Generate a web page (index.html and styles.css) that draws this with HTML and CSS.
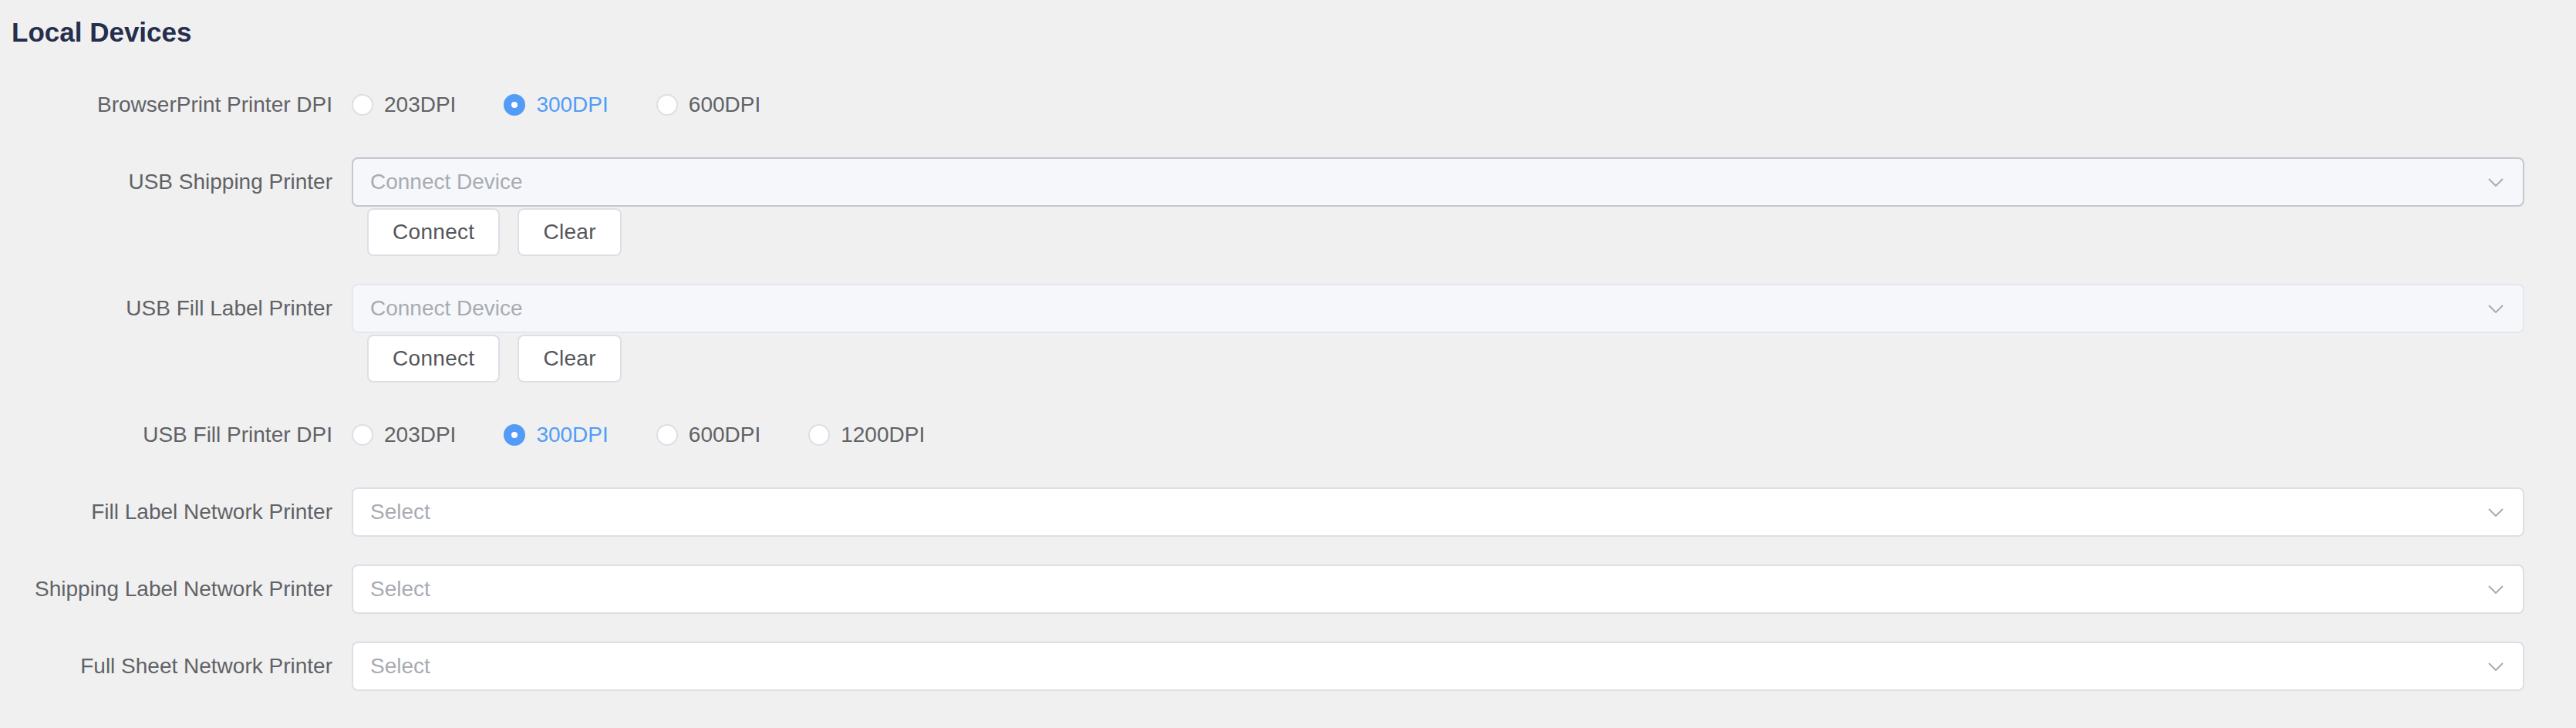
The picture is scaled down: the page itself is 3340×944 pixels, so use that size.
FILE: index.html
```html
<!DOCTYPE html>
<html lang="en">
<head>
<meta charset="utf-8">
<title>Local Devices</title>
<link rel="stylesheet" href="styles.css">
</head>
<body>
<div class="page">
  <h2 class="title">Local Devices</h2>
  <form class="form">
    <div class="form-item">
      <label class="form-label">BrowserPrint Printer DPI</label>
      <div class="form-content">
        <div class="radio-group">
          <label class="radio"><span class="radio-input"></span><span class="radio-label">203DPI</span></label>
          <label class="radio is-checked"><span class="radio-input"></span><span class="radio-label">300DPI</span></label>
          <label class="radio"><span class="radio-input"></span><span class="radio-label">600DPI</span></label>
        </div>
      </div>
    </div>

    <div class="form-item">
      <label class="form-label">USB Shipping Printer</label>
      <div class="form-content">
        <div class="select is-disabled is-hover">
          <span class="placeholder">Connect Device</span>
          <svg class="chevron" width="20" height="11" viewBox="0 0 20 11"><polyline points="1,1 10,10 19,1" fill="none" stroke="#a8abb2" stroke-width="2"/></svg>
        </div>
        <div class="btn-row">
          <button type="button" class="btn">Connect</button>
          <button type="button" class="btn">Clear</button>
        </div>
      </div>
    </div>

    <div class="form-item">
      <label class="form-label">USB Fill Label Printer</label>
      <div class="form-content">
        <div class="select is-disabled">
          <span class="placeholder">Connect Device</span>
          <svg class="chevron" width="20" height="11" viewBox="0 0 20 11"><polyline points="1,1 10,10 19,1" fill="none" stroke="#a8abb2" stroke-width="2"/></svg>
        </div>
        <div class="btn-row">
          <button type="button" class="btn">Connect</button>
          <button type="button" class="btn">Clear</button>
        </div>
      </div>
    </div>

    <div class="form-item">
      <label class="form-label">USB Fill Printer DPI</label>
      <div class="form-content">
        <div class="radio-group">
          <label class="radio"><span class="radio-input"></span><span class="radio-label">203DPI</span></label>
          <label class="radio is-checked"><span class="radio-input"></span><span class="radio-label">300DPI</span></label>
          <label class="radio"><span class="radio-input"></span><span class="radio-label">600DPI</span></label>
          <label class="radio"><span class="radio-input"></span><span class="radio-label">1200DPI</span></label>
        </div>
      </div>
    </div>

    <div class="form-item">
      <label class="form-label">Fill Label Network Printer</label>
      <div class="form-content">
        <div class="select">
          <span class="placeholder">Select</span>
          <svg class="chevron" width="20" height="11" viewBox="0 0 20 11"><polyline points="1,1 10,10 19,1" fill="none" stroke="#a8abb2" stroke-width="2"/></svg>
        </div>
      </div>
    </div>

    <div class="form-item">
      <label class="form-label">Shipping Label Network Printer</label>
      <div class="form-content">
        <div class="select">
          <span class="placeholder">Select</span>
          <svg class="chevron" width="20" height="11" viewBox="0 0 20 11"><polyline points="1,1 10,10 19,1" fill="none" stroke="#a8abb2" stroke-width="2"/></svg>
        </div>
      </div>
    </div>

    <div class="form-item">
      <label class="form-label">Full Sheet Network Printer</label>
      <div class="form-content">
        <div class="select">
          <span class="placeholder">Select</span>
          <svg class="chevron" width="20" height="11" viewBox="0 0 20 11"><polyline points="1,1 10,10 19,1" fill="none" stroke="#a8abb2" stroke-width="2"/></svg>
        </div>
      </div>
    </div>
  </form>
</div>
</body>
</html>
```
FILE: styles.css
```css
html, body {
  margin: 0;
  padding: 0;
  background: #f0f0f0;
}

body {
  font-family: "Liberation Sans", Arial, Helvetica, sans-serif;
  color: #606266;
}

.page {
  padding: 18px 67px 0 15px;
}

.title {
  margin: 0 0 38px 0;
  font-size: 35px;
  line-height: 48px;
  font-weight: 700;
  color: #262e4d;
}

.form {
  margin: 0;
}

.form-item {
  display: flex;
  margin-bottom: 36px;
}

.form-label {
  flex: none;
  width: 441px;
  box-sizing: border-box;
  padding-right: 25px;
  text-align: right;
  font-size: 28px;
  line-height: 64px;
  color: #606266;
}

.form-content {
  flex: 1;
  min-width: 0;
}

.radio-group {
  display: flex;
  align-items: center;
  height: 64px;
  gap: 62px;
}

.radio {
  display: flex;
  align-items: center;
  cursor: pointer;
}

.radio-input {
  width: 28px;
  height: 28px;
  box-sizing: border-box;
  border: 2px solid #dcdfe6;
  border-radius: 50%;
  background: #ffffff;
  display: flex;
  align-items: center;
  justify-content: center;
}

.radio.is-checked .radio-input {
  background: #529cf8;
  border-color: #529cf8;
}

.radio.is-checked .radio-input::after {
  content: "";
  width: 8px;
  height: 8px;
  border-radius: 50%;
  background: #ffffff;
}

.radio-label {
  padding-left: 14px;
  font-size: 28px;
  line-height: 1;
  color: #606266;
}

.radio.is-checked .radio-label {
  color: #529cf8;
}

.select {
  height: 64px;
  box-sizing: border-box;
  border: 2px solid #dcdfe6;
  border-radius: 8px;
  background: #ffffff;
  display: flex;
  align-items: center;
  justify-content: space-between;
  padding: 0 25px 0 22px;
}

.select.is-disabled {
  background: #f5f7fa;
  border-color: #e4e7ed;
}

.select.is-hover {
  border-color: #c4c7cf;
}

.placeholder {
  font-size: 28px;
  color: #a8abb2;
}

.chevron {
  display: block;
  flex: none;
}

.btn-row {
  display: flex;
  gap: 23px;
  padding: 2px 0 0 20px;
}

.btn {
  height: 62px;
  box-sizing: border-box;
  padding: 0 31px;
  border: 2px solid #dcdfe6;
  border-radius: 8px;
  background: #ffffff;
  font-family: "Liberation Sans", Arial, Helvetica, sans-serif;
  font-size: 28px;
  letter-spacing: 0.3px;
  color: #555659;
  cursor: pointer;
}
```
